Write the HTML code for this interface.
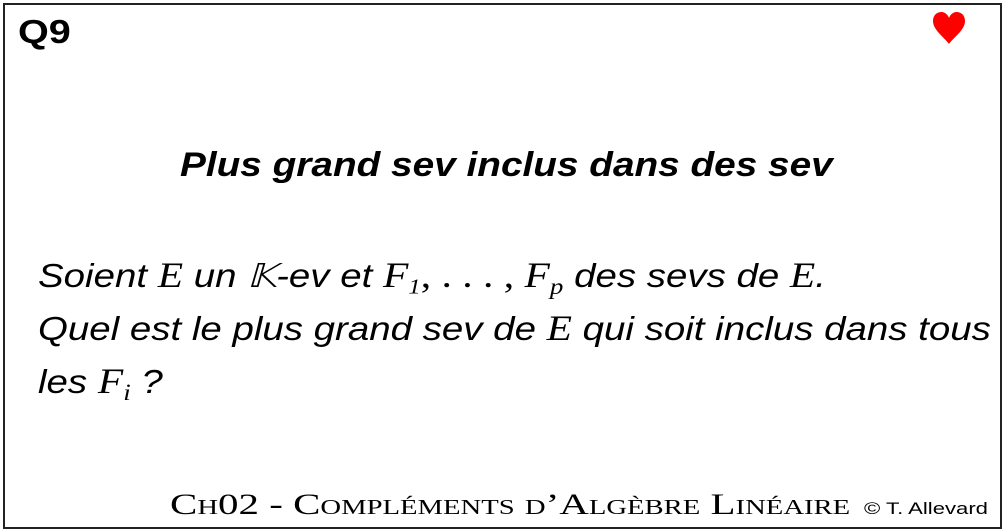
<!DOCTYPE html>
<html><head><meta charset="utf-8"><style>
html,body{margin:0;padding:0;background:#fff;width:1004px;height:531px;overflow:hidden}
.f{position:absolute;left:3px;top:3px;width:995px;height:522px;border:2px solid #222}
.a{position:absolute;white-space:nowrap;font-family:"Liberation Sans",sans-serif;color:#000}
.m{font-family:"Liberation Serif",serif;font-style:italic;font-size:1.08em;line-height:0}
sub{font-size:0.65em;vertical-align:-0.3em;font-family:"Liberation Serif",serif;line-height:0}
</style></head><body>
<div class="f"></div>
<div class="a" style="left:18px;top:13px;font-size:33px;font-weight:bold;transform:scaleX(1.2);transform-origin:left">Q9</div>
<svg style="position:absolute;left:932px;top:11px" width="34" height="34" viewBox="0 0 34 34"><path d="M17 33 C12 26 1 19 1 10 C1 4 5 1 9.5 1 C13 1 16 4 17 7 C18 4 21 1 24.5 1 C29 1 33 4 33 10 C33 19 22 26 17 33Z" fill="#f00"/></svg>
<div class="a" style="left:180px;top:146px;font-size:34px;font-weight:bold;font-style:italic;transform:scaleX(1.14);transform-origin:left">Plus grand sev inclus dans des sev</div>
<div class="a" style="left:38px;top:249px;font-size:33px;font-style:italic;line-height:53px;transform:scaleX(1.165);transform-origin:left">Soient <span class="m">E</span> un 𝕂-ev et <span class="m">F</span><sub>1</sub><span class="m" style="font-style:normal">, . . . , </span><span class="m">F<sub style="font-style:italic">p</sub></span> des sevs de <span class="m">E</span>.<br>Quel est le plus grand sev de <span class="m">E</span> qui soit inclus dans tous<br>les <span class="m">F<sub style="font-style:italic">i</sub></span> ?</div>
<div class="a" style="left:170px;top:488px;font-size:30px;font-family:'Liberation Serif',serif;font-variant:small-caps;transform:scaleX(1.365);transform-origin:left">Ch02 - Compléments d’Algèbre Linéaire</div>
<div class="a" style="left:864px;top:499px;font-size:17px;transform:scaleX(1.3);transform-origin:left">© T. Allevard</div>
</body></html>
